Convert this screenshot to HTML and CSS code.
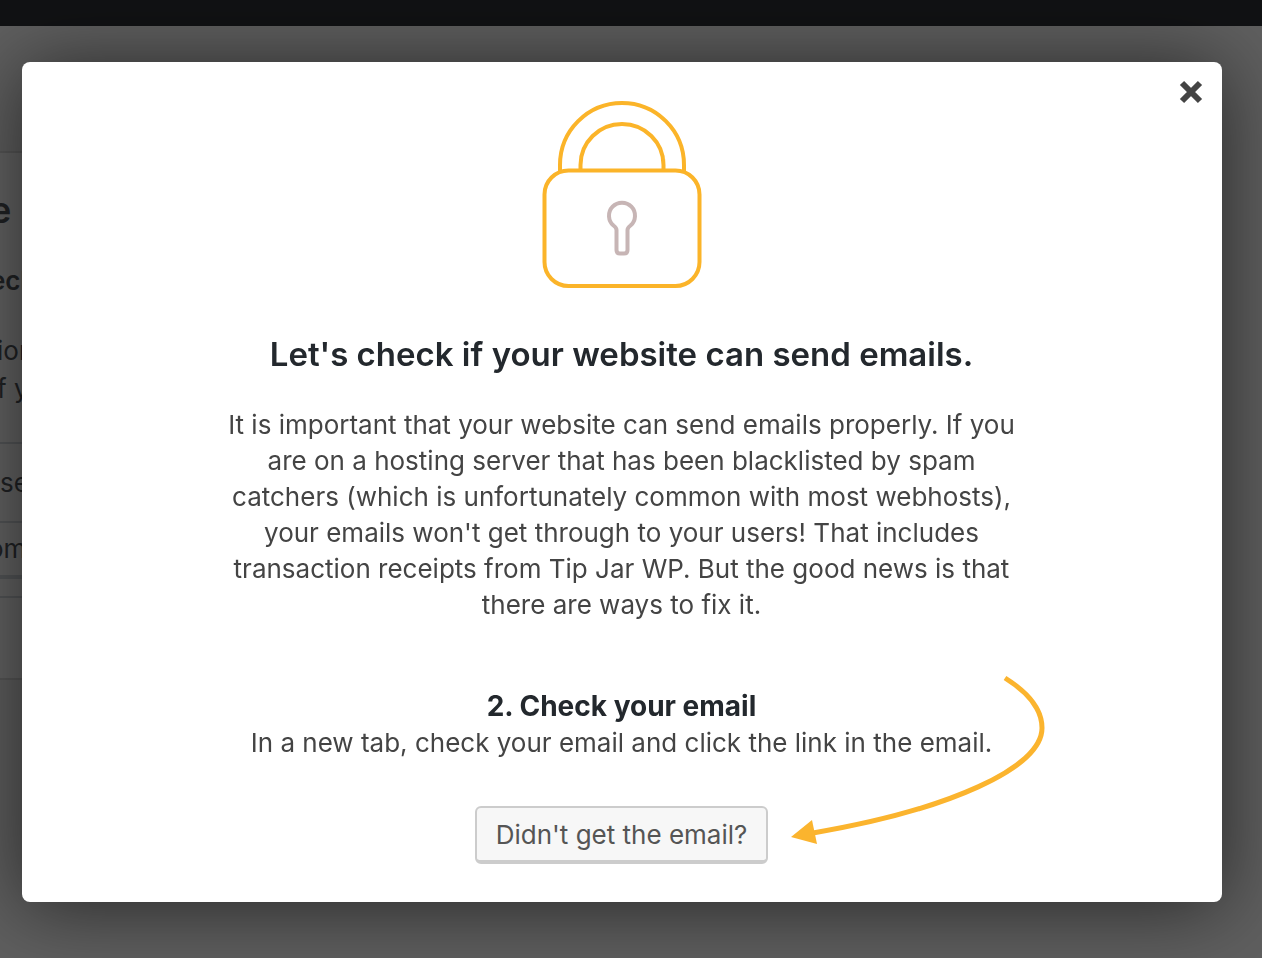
FILE: index.html
```html
<!DOCTYPE html>
<html lang="en">
<head>
<meta charset="utf-8">
<meta name="viewport" content="width=device-width, initial-scale=1">
<title>Email check</title>
<link rel="stylesheet" href="styles.css">
</head>
<body>
<div class="page" aria-hidden="true">
  <div class="admin-bar"></div>
  <div class="panel">
    <div class="panel-title">e</div>
    <div class="panel-subtitle">eck</div>
    <div class="panel-copy">ion<br>f y</div>
    <div class="panel-row">se</div>
    <div class="panel-action">om</div>
    <div class="panel-footer"></div>
  </div>
</div>
<div class="overlay">
  <main class="modal" role="dialog" aria-modal="true" aria-labelledby="modal-title">
    <button class="close" type="button" aria-label="Close">
      <svg viewBox="0 0 24 24" width="24" height="24"><path d="M3 3 21 21M21 3 3 21" fill="none" stroke="#444" stroke-width="6"/></svg>
    </button>
    <svg class="lock" viewBox="0 0 160 190" width="160" height="190" fill="none" stroke="#fbb429" stroke-width="4" aria-hidden="true">
      <path d="M18 71v-6a62 62 0 0 1 124 0v6M38.500 70v-5a41.500 41 0 0 1 83 0v5"/>
      <rect x="2.500" y="70.500" width="155" height="115.500" rx="24"/>
      <path stroke="#c7b5b5" d="M74.500 150v-20c0-2-1-3-3-4.500a13 13 0 1 1 17 0c-2 1.500-3 2.500-3 4.500v20q0 3.500-3.500 3.500h-4q-3.500 0-3.500-3.500z"/>
    </svg>
    <h1 id="modal-title">Let's check if your website can send emails.</h1>
    <p class="intro">It is important that your website can send emails properly. If you<br>are on a hosting server that has been blacklisted by spam<br>catchers (which is unfortunately common with most webhosts),<br>your emails won't get through to your users! That includes<br>transaction receipts from Tip Jar WP. But the good news is that<br>there are ways to fix it.</p>
    <section class="step">
      <h2>2. Check your email</h2>
      <p>In a new tab, check your email and click the link in the email.</p>
      <div class="action">
        <button class="resend" type="button">Didn't get the email?</button>
        <svg class="arrow" viewBox="0 0 256 172" width="256" height="172" aria-hidden="true">
          <path d="M214 4C238 19 251 36 251 54C251 94 157 136 22 159" fill="none" stroke="#fbb42e" stroke-width="5"/>
          <path d="M0 163 21 146 26 170z" fill="#fbb42e"/>
        </svg>
      </div>
    </section>
  </main>
</div>
</body>
</html>
```
FILE: styles.css
```css
* { box-sizing: border-box; }
body { margin: 0; font-family: Inter, "Liberation Sans", sans-serif; font-size: 26px; line-height: 36px; color: #444; }
h1, h2, p { margin: 0; }
h1, h2 { color: #23282d; }
button { font: inherit; cursor: pointer; }
svg { display: block; }

.page { min-height: 100vh; overflow: hidden; background: #5f5f5f; color: #202224; }
.admin-bar { height: 26px; background: #111214; }
.panel { width: 90%; margin-top: 125px; border-top: 2px solid #575757; border-bottom: 2px solid #575757; background: #646464; }
.panel-title { padding-top: 35px; margin-left: -10px; font-size: 36px; line-height: 44px; font-weight: 600; }
.panel-subtitle { margin-left: -10px; padding-top: 31px; font-weight: 600; }
.panel-copy { margin-left: -3px; padding: 33px 0 34px; line-height: 38px; }
.panel-row { padding: 21px 0 20px; border-top: 2px solid #545658; }
.panel-action { height: 58px; padding-top: 8px; border-top: 2px solid #545658; border-bottom: 4px solid #545658; text-indent: -12px; }
.panel-footer { height: 82px; margin-top: 17px; border-top: 2px solid #545658; }

.overlay { position: fixed; inset: 0; padding: 62px 40px 56px 22px; display: flex; }
.modal { position: relative; flex: 1; display: flex; flex-direction: column; align-items: center; padding: 38px 41px 38px 40px; border-radius: 8px; background: #fff; box-shadow: 0 4px 80px rgba(0, 0, 0, .6); text-align: center; }
.close { position: absolute; top: 18px; right: 19px; padding: 0; border: 0; background: none; }
.lock { flex: none; }
h1 { margin-top: 42px; font-size: 33px; line-height: 44px; font-weight: 600; }
.intro { margin-top: 31px; }
.step { margin-top: 64px; display: flex; flex-direction: column; align-items: center; }
h2 { font-size: 28px; line-height: 38px; font-weight: 700; }
.action { position: relative; margin-top: 45px; }
.resend { display: block; height: 58px; padding: 1px 19px 0; border: 2px solid #ccc; border-bottom-width: 4px; border-radius: 6px; background: #f7f7f7; color: #555; }
.arrow { position: absolute; left: 100%; bottom: 18px; margin-left: 23px; pointer-events: none; }
```
